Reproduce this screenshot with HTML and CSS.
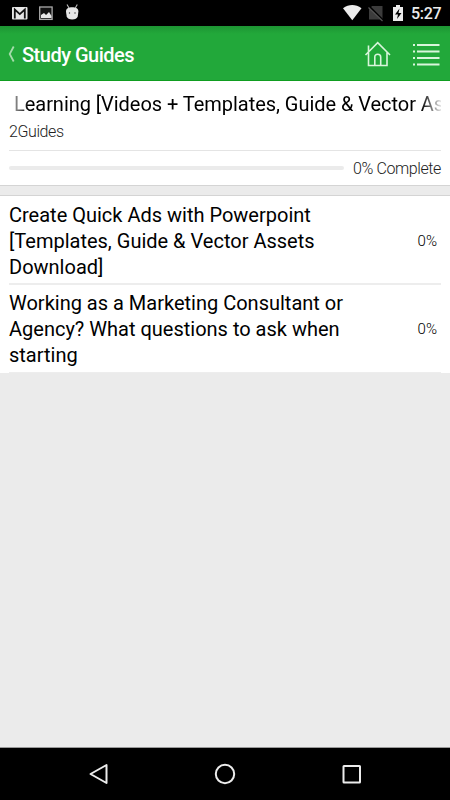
FILE: index.html
```html
<!DOCTYPE html>
<html lang="en">
<head>
    <meta charset="UTF-8">
    <meta name="viewport" content="width=device-width, initial-scale=1.0">
    <title>Study Guides</title>
    <link rel="stylesheet" href="styles.css">
</head>
<body>
    <div class="screen">
        <div class="status-bar">
            <svg class="status-icons" width="80" height="26" viewBox="0 0 80 26">
                <rect x="12" y="7" width="15.5" height="12.5" rx="1" fill="#e6e6e6"/>
                <path d="M14.8 18.5V9.5l5 4.6 5-4.6v9" fill="none" stroke="#111" stroke-width="1.8"/>
                <rect x="39.7" y="7" width="12.4" height="12.4" fill="#111" stroke="#aaa" stroke-width="1.3"/>
                <path d="M41 18v-3l3-2 2 2 3-3 2.5 4v2z" fill="#e6e6e6"/>
                <path d="M66 11.5c0-3 2.5-4.2 6.2-4.2s6.2 1.2 6.2 4.2l-.7 5c-.6 2-2.5 3-5.500 3s-4.900-1-5.500-3z" fill="#e6e6e6"/>
                <path d="M67 4.500l2 3.500M77.300 4.500l-2 3.500" stroke="#bbb" stroke-width="1.1"/>
                <circle cx="69.500" cy="13" r=".7" fill="#333"/>
                <circle cx="75" cy="13" r=".7" fill="#333"/>
            </svg>
            <div class="status-right">
                <svg width="64" height="26" viewBox="0 0 64 26">
                    <path d="M1 8.200c6-4.200 12.500-4.200 18.500 0L10.300 20.200z" fill="#ececec"/>
                    <path d="M30 6h10.500v13.500H27V9.500z" fill="#3c3c3c"/>
                    <path d="M27 6.500l14 14" stroke="#000" stroke-width="2.4"/>
                    <path d="M26.500 7.500L40.500 21" stroke="#555" stroke-width="1.2"/>
                    <path d="M51 7h3V5h4v2h3v14H51z" fill="#ececec"/>
                    <path d="M57.500 8.500l-4.500 6h3l-1 4.500 4.500-6h-3z" fill="#000"/>
                </svg>
                <span class="clock">5:27</span>
            </div>
        </div>

        <div class="header">
            <svg class="back" width="7" height="18" viewBox="0 0 7 18">
                <path d="M5.700 1.500L1.700 9l4 7.500" fill="none" stroke="#a5dcab" stroke-width="1.8"/>
            </svg>
            <h1>Study Guides</h1>
            <svg class="home" width="28" height="28" viewBox="0 0 28 28">
                <path d="M1.500 15L13.700 2.700 26 15M4.500 12.500V5.500M4.500 12v13.500h18.500V12M10.800 25v-8c0-1.800 1-2.700 2.900-2.700s3 .9 3 2.700v8" fill="none" stroke="#d9f5db" stroke-width="1.6"/>
            </svg>
            <svg class="menu" width="27" height="24" viewBox="0 0 27 24">
                <path d="M0 2h2M4 2h22.500M0 8.500h2M4 8.500h22.500M0 15h2M4 15h22.500M0 21.500h2M4 21.500h22.500" stroke="#d9f5db" stroke-width="2"/>
            </svg>
        </div>

        <div class="summary">
            <div class="marquee">Learning [Videos + Templates, Guide &amp; Vector Assets Download]</div>
            <div class="count">2Guides</div>
            <div class="progress-row">
                <div class="progress"></div>
                <span class="complete">0% Complete</span>
            </div>
        </div>

        <div class="guides">
            <div class="guide">
                <div class="guide-title">Create Quick Ads with Powerpoint [Templates, Guide &amp; Vector Assets Download]</div>
                <span class="percent">0%</span>
            </div>
            <div class="guide">
                <div class="guide-title">Working as a Marketing Consultant or Agency? What questions to ask when starting</div>
                <span class="percent">0%</span>
            </div>
        </div>

        <div class="nav-bar">
            <svg width="20" height="22" viewBox="0 0 20 22">
                <path d="M17.500 2v18L1.500 11z" fill="none" stroke="#ececec" stroke-width="2" stroke-linejoin="round"/>
            </svg>
            <svg width="22" height="22" viewBox="0 0 22 22">
                <circle cx="11" cy="11" r="9.200" fill="none" stroke="#ececec" stroke-width="2"/>
            </svg>
            <svg width="20" height="22" viewBox="0 0 20 22">
                <rect x="2.500" y="3" width="16.500" height="16.500" rx=".5" fill="none" stroke="#ececec" stroke-width="2"/>
            </svg>
        </div>
    </div>
</body>
</html>
```
FILE: styles.css
```css
* {
    box-sizing: border-box;
}
body {
    margin: 0;
    font-family: Roboto, "Liberation Sans", sans-serif;
    color: #000;
}
.screen {
    width: 450px;
    height: 800px;
    display: flex;
    flex-direction: column;
    background: #ebebeb;
    overflow: hidden;
}
svg {
    display: block;
    flex: none;
}
.status-bar {
    height: 26px;
    background: #000;
    display: flex;
    justify-content: space-between;
}
.status-right {
    display: flex;
    padding-right: 9px;
}
.clock {
    width: 30px;
    margin-left: 5px;
    color: #ececec;
    font-size: 16px;
    font-weight: 500;
    line-height: 27px;
    letter-spacing: -0.3px;
    white-space: nowrap;
}
.header {
    height: 55px;
    padding: 0 10px 0 8px;
    background: linear-gradient(#1d9433, #22a83a 8px, #22a83a);
    border-bottom: 1px solid #0f9d20;
    display: flex;
    align-items: center;
}
.back {
    margin-top: 1px;
}
.header h1 {
    flex: 1;
    margin: 3px 0 0 7px;
    color: #fff;
    font-size: 20px;
    font-weight: 500;
    line-height: 24px;
    letter-spacing: -0.5px;
}
.home {
    margin: 1px 21px 0 0;
}
.menu {
    margin-top: 3px;
}
.summary {
    height: 105px;
    padding: 10px 9px 0;
    background: #fff;
    border-bottom: 1px solid #d4d4d4;
}
.marquee {
    height: 26px;
    padding-left: 5px;
    font-size: 20px;
    line-height: 26px;
    letter-spacing: -0.04px;
    white-space: nowrap;
    overflow: hidden;
    -webkit-mask-image: linear-gradient(to right, rgba(0,0,0,0.2), #000 20px, #000 calc(100% - 20px), rgba(0,0,0,0.1));
    mask-image: linear-gradient(to right, rgba(0,0,0,0.2), #000 20px, #000 calc(100% - 20px), rgba(0,0,0,0.1));
}
.count {
    height: 34px;
    padding-top: 4px;
    border-bottom: 1px solid #e4e4e4;
    font-size: 16px;
    font-weight: 300;
    line-height: 22px;
    letter-spacing: -0.4px;
    color: #222;
}
.progress-row {
    height: 34px;
    display: flex;
    align-items: center;
}
.progress {
    flex: 1;
    height: 4px;
    border-radius: 2px;
    background: #ebebeb;
}
.complete {
    width: 88px;
    margin: 1px 0 0 9px;
    font-size: 16px;
    font-weight: 300;
    letter-spacing: -0.4px;
    white-space: nowrap;
    color: #222;
}
.guides {
    margin-top: 9px;
    padding: 0 9px;
    background: #fff;
    border-top: 1px solid #d4d4d4;
}
.guide {
    display: flex;
    align-items: center;
    justify-content: space-between;
    padding: 6px 4px 3px 0;
    border-bottom: 2px solid #ededed;
}
.guide + .guide {
    padding: 5px 4px 4px 0;
    border-bottom-width: 1px;
}
.guide-title {
    width: 350px;
    font-size: 20px;
    line-height: 26px;
}
.percent {
    font-size: 15px;
    font-weight: 300;
}
.nav-bar {
    height: 53px;
    margin-top: auto;
    padding: 0 89px;
    background: #000;
    border-top: 1px solid #999;
    display: flex;
    align-items: center;
    justify-content: space-between;
}
```
